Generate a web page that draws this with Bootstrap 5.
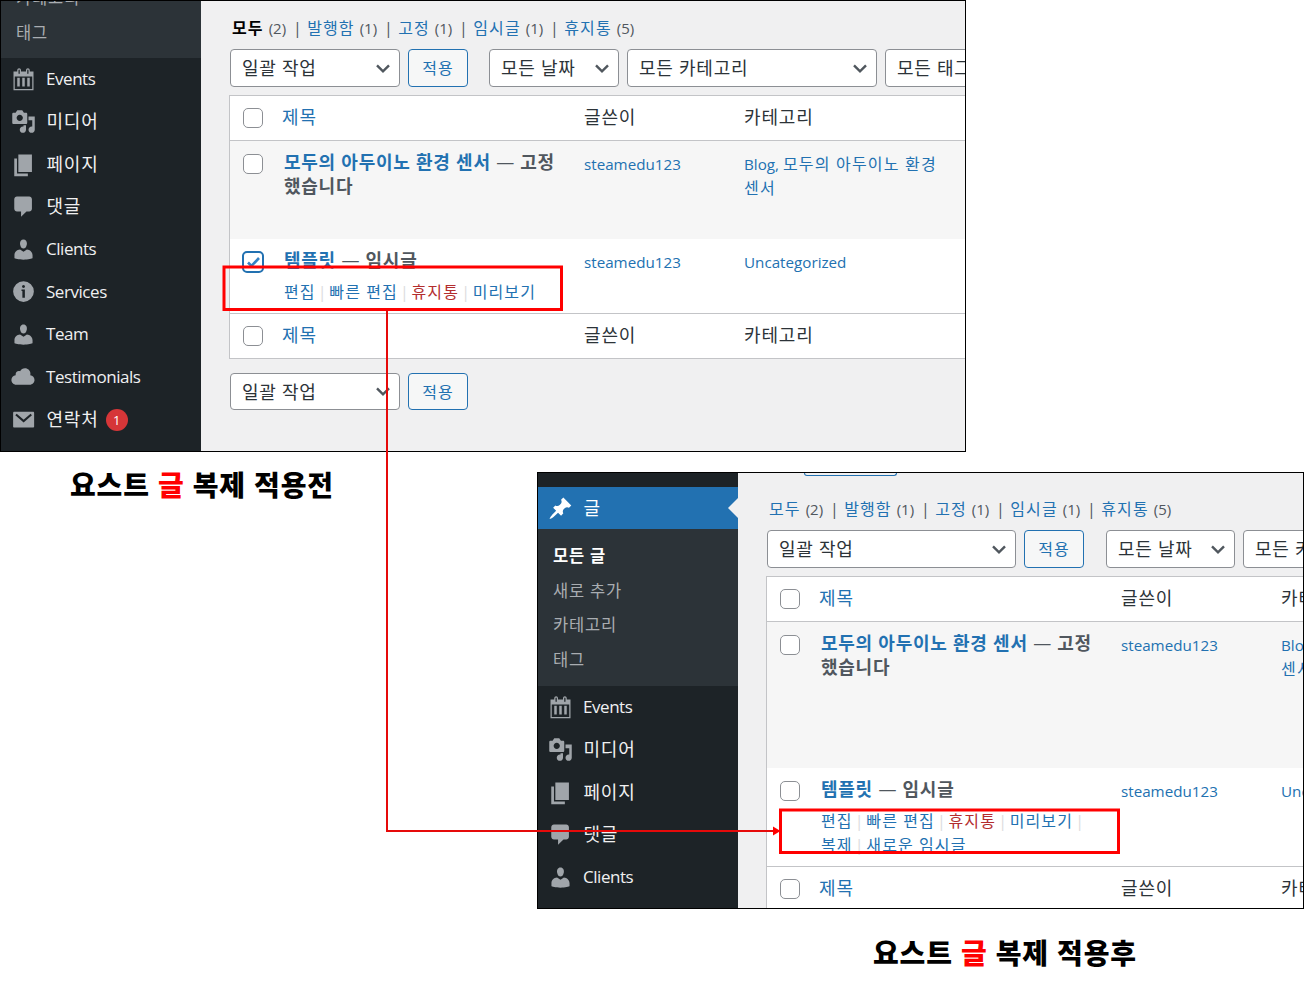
<!DOCTYPE html>
<html lang="ko">
<head>
    <meta charset="UTF-8">
    <meta name="viewport" content="width=device-width, initial-scale=1.0">
    <title>요스트 글 복제</title>
    <!-- Bootstrap CSS -->
    <link href="https://cdn.jsdelivr.net/npm/bootstrap@5.3.0/dist/css/bootstrap.min.css" rel="stylesheet">
    <style>
        body {
            width: 1304px;
            height: 987px;
            overflow: hidden;
            background: #fff;
            font-family: "Open Sans", "Noto Sans CJK KR", sans-serif;
            font-size: 17px;
            line-height: 24px;
            color: #50575e;
        }
        a { color: #2271b1; text-decoration: none; }

        /* Panels */
        .wp-panel {
            border: 1px solid #000;
            overflow: hidden;
            background: #f0f0f1;
        }
        .panel-before { width: 966px; height: 452px; }
        .panel-after { width: 767px; height: 437px; }
        .wp-side { width: 200px; background: #1d2327; }
        .wp-main { padding-left: 28px; white-space: nowrap; }
        .panel-before .wp-main { padding-top: 15px; }
        .side-after { padding-top: 14px; }

        /* Sidebar */
        .menu-item {
            height: 42.5px;
            padding-left: 10px;
            color: #f0f0f1;
            font-size: 17px;
            letter-spacing: -.45px;
        }
        .menu-item svg { width: 25px; height: 25px; margin-right: 10px; fill: #a0a5aa; }
        .menu-item .ko { font-size: 18px; letter-spacing: .8px; margin: -1px 0 0 .5px; }
        .menu-item.current { height: 42px; background: #2271b1; color: #fff; }
        .menu-item.current svg { fill: #fff; }
        .menu-item.current::after {
            content: "";
            margin-left: auto;
            border: 10px solid transparent;
            border-right-color: #f0f0f1;
            border-left: 0;
        }
        .sub-menu { background: #2c3338; padding-left: 15px; }
        .sub-menu a {
            color: #a9adb1;
            height: 34.6px;
            line-height: 34.6px;
            font-size: 16.5px;
            letter-spacing: .8px;
        }
        .sub-menu a.on { color: #fff; font-weight: 700; }
        .sub-tail { height: 57px; }
        .sub-tail a { margin-top: -20px; }
        .sub-tail a + a { margin-top: 0; }
        .sub-full { height: 157px; padding-top: 10px; }
        .count-bubble {
            width: 22px;
            height: 22px;
            margin-left: 7px;
            margin-top: 2px;
            background: #d63638;
            color: #fff;
            font-size: 13px;
            letter-spacing: 0;
        }

        /* Filters */
        .status-links { padding-left: 3px; height: 24px; font-size: 16px; letter-spacing: 1.1px; }
        .status-links .num { font-size: 15px; letter-spacing: 0; margin-left: 5px; }
        .status-links .bar { margin: 0 5.4px 0 6.9px; letter-spacing: 0; }
        .status-links b { color: #000; }
        .after-links { margin-top: 21px; }
        .filter-row { padding-left: 1px; margin-top: 9px; }
        .wp-select {
            height: 38px;
            border: 1px solid #8c8f94;
            border-radius: 4px;
            background: #fff;
            color: #2c3338;
            padding: 0 9px 0 11px;
            font-size: 18px;
            letter-spacing: .75px;
            flex-shrink: 0;
        }
        .wp-select svg { width: 14px; height: 9px; fill: none; stroke: #50575e; stroke-width: 2.4; }
        .wp-btn {
            width: 60px;
            height: 38px;
            border: 1px solid #2271b1;
            border-radius: 4px;
            background: #f6f7f7;
            color: #2271b1;
            font-size: 16px;
            letter-spacing: 1px;
            flex-shrink: 0;
        }
        .w-170 { width: 170px; }
        .w-130 { width: 130px; }
        .w-250 { width: 250px; }
        .w-249 { width: 249px; }
        .date-gap { margin-left: 13px; }
        .panel-after .date-gap { margin-left: 14px; width: 129px; }
        .bottom-row { margin-top: 14px; }
        .bottom-row > * { height: 37px; }
        .cut-btn {
            width: 93px;
            height: 3px;
            margin-left: 38px;
            border: 1px solid #2271b1;
            border-top: 0;
            border-radius: 0 0 4px 4px;
        }

        /* Post list */
        .post-list {
            width: 760px;
            margin-top: 8px;
            background: #fff;
            border: 1px solid #c3c4c7;
        }
        .post-row {
            display: grid;
            grid-template-columns: 52px 302px 160px 1fr;
        }
        .post-head {
            height: 45px;
            border-bottom: 1px solid #c3c4c7;
            color: #2c3338;
            font-size: 18px;
            letter-spacing: .85px;
            line-height: 43px;
        }
        .post-foot { border-top: 1px solid #c3c4c7; border-bottom: 0; }
        .post-row input {
            appearance: none;
            width: 20px;
            height: 20px;
            margin: 12px 0 0 13px;
            display: block;
            border: 1px solid #8c8f94;
            border-radius: 5px;
            background: #fff;
        }
        .post-row input:checked {
            width: 22px;
            height: 22px;
            margin: 12px 0 0 12px;
            border: 2px solid #2271b1;
            background: #fff url("data:image/svg+xml,%3Csvg xmlns='http://www.w3.org/2000/svg' viewBox='0 0 18 18'%3E%3Cpath d='M4 9.500l3.500 3.500 7.500-8' fill='none' stroke='%233582c4' stroke-width='2.600'/%3E%3C/svg%3E") center / 18px;
        }
        .post-row input.lower { margin-top: 13px; }
        .post-title {
            padding: 9px 0 0 2px;
            font-size: 18px;
            letter-spacing: .75px;
            font-weight: 700;
        }
        .post-title .dash { font-weight: 400; }
        .post-meta { padding-top: 11px; font-size: 15.2px; letter-spacing: 0; }
        .post-meta .ko { font-size: 16px; letter-spacing: 1.2px; }
        .row-sticky { background: #f6f6f6; }
        .row-actions {
            padding: 8px 0 0 2px;
            font-size: 16px;
            letter-spacing: 1.1px;
            font-weight: 400;
            color: #c3c4c7;
        }
        .row-actions i { font-style: normal; margin: 0 2.7px 0 2.2px; letter-spacing: 0; color: #dcdcde; }
        .row-actions .trash { color: #b32d2e; }

        /* Row heights, they differ between the two panels */
        .before-first { height: 98px; }
        .before-second { height: 74px; }
        .after-first { height: 146px; }
        .after-second { height: 98px; }

        /* Captions */
        .caption-text {
            font-size: 28px;
            line-height: 40px;
            font-weight: 900;
            letter-spacing: .85px;
            color: #000;
            white-space: nowrap;
        }
        .caption-text span { color: #f00; }
        .caption-before { width: 537px; margin-top: -7px; padding-left: 70px; }
        .caption-after { margin: 24px 0 0 873px; }
        .after-row { margin-top: 20px; }

        .marks { width: 1304px; height: 987px; pointer-events: none; }
    </style>
</head>
<body class="position-relative">
    <!-- Icons -->
    <svg class="d-none">
        <symbol id="i-post" viewBox="0 0 20 20"><path d="M10.44 3.02l1.82-1.82 6.36 6.35-1.83 1.82c-1.05-.68-2.48-.57-3.41.36l-.75.75c-.92.93-1.04 2.35-.35 3.41l-1.83 1.82-2.41-2.41-2.8 2.79c-.42.42-3.38 2.71-3.8 2.29s1.86-3.39 2.28-3.81l2.79-2.79L4.1 9.36l1.83-1.82c1.05.69 2.48.57 3.4-.36l.75-.75c.93-.92 1.05-2.35.36-3.41z"/></symbol>
        <symbol id="i-cal" viewBox="0 0.5 20 20"><path fill-rule="evenodd" d="M15 4h3v15H2V4h3V3c0-.83.67-1.5 1.5-1.5S8 2.17 8 3v1h4V3c0-.83.67-1.5 1.5-1.5S15 2.17 15 3v1zM6 3v2.5c0 .28.22.5.5.5s.5-.22.5-.5V3c0-.28-.22-.5-.5-.5S6 2.72 6 3zm7 0v2.5c0 .28.22.5.5.5s.5-.22.5-.5V3c0-.28-.22-.5-.5-.5s-.5.22-.5.5zM17 18V8H3v10h14zM7 16V9H5v7h2zm4 0V9H9v7h2zm4 0V9h-2v7h2z"/></symbol>
        <symbol id="i-media" viewBox="0 0 20 20"><path fill-rule="evenodd" d="M13 11V4c0-.55-.45-1-1-1h-1.67L9 1H5L3.67 3H2c-.55 0-1 .45-1 1v7c0 .55.45 1 1 1h10c.55 0 1-.45 1-1zM7 4.5c1.38 0 2.5 1.12 2.5 2.5S8.38 9.5 7 9.5 4.5 8.38 4.5 7 5.62 4.5 7 4.5zM14 6h5v10.5c0 1.38-1.12 2.5-2.5 2.5S14 17.88 14 16.5s1.12-2.5 2.5-2.5c.17 0 .34.02.5.05V9h-3V6zm-4 8.05V13h2v3.5c0 1.38-1.12 2.5-2.5 2.5S7 17.88 7 16.5 8.12 14 9.5 14c.17 0 .34.02.5.05z"/></symbol>
        <symbol id="i-page" viewBox="0.6 0.2 18.4 18.4"><path d="M6 15V2h10v13H6zm-1 1h8v2H3V5h2v11z"/></symbol>
        <symbol id="i-comment" viewBox="0.6 0.2 18.4 18.4"><path d="M5 2h9c1.1 0 2 .9 2 2v7c0 1.1-.9 2-2 2h-2l-4 4v-4H5c-1.100 0-2-.9-2-2V4c0-1.100.900-2 2-2z"/></symbol>
        <symbol id="i-user" viewBox="0 0 20 20"><path d="M10 9.25c-2.27 0-2.73-3.44-2.73-3.44C7 4.02 7.82 2 9.97 2c2.16 0 2.98 2.02 2.71 3.81 0 0-.41 3.44-2.68 3.44zm0 2.57L12.72 10c2.39 0 4.52 2.33 4.52 4.53v2.49s-3.65 1.13-7.24 1.13c-3.65 0-7.24-1.13-7.24-1.13v-2.49c0-2.25 1.94-4.48 4.47-4.48z"/></symbol>
        <symbol id="i-info" viewBox="0 0 20 20"><path fill-rule="evenodd" d="M10 1.7a8.3 8.3 0 1 1 0 16.6 8.3 8.3 0 0 1 0-16.6zM11.2 6a1.2 1.2 0 1 0-2.4 0 1.2 1.2 0 0 0 2.4 0zM8.4 8.4v1.1h.7v5.500h2V8.400z"/></symbol>
        <symbol id="i-cloud" viewBox="0.7 0.8 18.4 18.4"><path d="M14.9 9c1.8.2 3.1 1.7 3.1 3.5 0 1.9-1.6 3.5-3.5 3.500h-10C2.600 16 1 14.400 1 12.500 1 10.700 2.300 9.300 4.100 9 4 7.100 5.100 6 6.500 6c.3 0 .7.1.9.2C8.100 4.900 9.400 4 11 4c2.200 0 4 1.800 4 4 0 .4-.1.7-.1 1z"/></symbol>
        <symbol id="i-mail" viewBox="0 0 20 20"><path d="M2.600 3.800h15c.5 0 .9.4.9.900v10.800c0 .5-.4.9-.9.9h-15c-.5 0-.9-.4-.9-.9V4.700c0-.5.400-.9.9-.9z"/><path d="M4 6l6.100 5.300 6.100-5.300" fill="none" stroke="#1d2327" stroke-width="1.700"/></symbol>
        <symbol id="i-down" viewBox="0 0 14 9"><path d="M1 1.300l6 6 6-6"/></symbol>
    </svg>

    <!-- 적용전 -->
    <div class="wp-panel panel-before d-flex">
        <nav class="wp-side flex-shrink-0">
            <div class="sub-menu sub-tail d-flex flex-column overflow-hidden">
                <a href="#" class="flex-shrink-0">카테고리</a>
                <a href="#" class="flex-shrink-0">태그</a>
            </div>
            <div class="menu-item d-flex align-items-center"><svg><use href="#i-cal"/></svg>Events</div>
            <div class="menu-item d-flex align-items-center"><svg><use href="#i-media"/></svg><span class="ko">미디어</span></div>
            <div class="menu-item d-flex align-items-center"><svg><use href="#i-page"/></svg><span class="ko">페이지</span></div>
            <div class="menu-item d-flex align-items-center"><svg><use href="#i-comment"/></svg><span class="ko">댓글</span></div>
            <div class="menu-item d-flex align-items-center"><svg><use href="#i-user"/></svg>Clients</div>
            <div class="menu-item d-flex align-items-center"><svg><use href="#i-info"/></svg>Services</div>
            <div class="menu-item d-flex align-items-center"><svg><use href="#i-user"/></svg>Team</div>
            <div class="menu-item d-flex align-items-center"><svg><use href="#i-cloud"/></svg>Testimonials</div>
            <div class="menu-item d-flex align-items-center"><svg><use href="#i-mail"/></svg><span class="ko">연락처</span><span class="count-bubble rounded-circle d-flex align-items-center justify-content-center">1</span></div>
        </nav>
        <main class="wp-main flex-grow-1 overflow-hidden">
            <div class="status-links d-flex align-items-center">
                <b>모두</b><span class="num">(2)</span><span class="bar">|</span>
                <a href="#">발행함</a><span class="num">(1)</span><span class="bar">|</span>
                <a href="#">고정</a><span class="num">(1)</span><span class="bar">|</span>
                <a href="#">임시글</a><span class="num">(1)</span><span class="bar">|</span>
                <a href="#">휴지통</a><span class="num">(5)</span>
            </div>
            <div class="filter-row d-flex gap-2">
                <div class="wp-select w-170 d-flex align-items-center justify-content-between">일괄 작업<svg><use href="#i-down"/></svg></div>
                <div class="wp-btn d-flex align-items-center justify-content-center">적용</div>
                <div class="wp-select w-130 date-gap d-flex align-items-center justify-content-between">모든 날짜<svg><use href="#i-down"/></svg></div>
                <div class="wp-select w-250 d-flex align-items-center justify-content-between">모든 카테고리<svg><use href="#i-down"/></svg></div>
                <div class="wp-select w-170 d-flex align-items-center justify-content-between ms-auto">모든 태그<svg><use href="#i-down"/></svg></div>
            </div>
            <div class="post-list">
                <div class="post-row post-head">
                    <div><input type="checkbox"></div><a href="#">제목</a><div>글쓴이</div><div>카테고리</div>
                </div>
                <div class="post-row row-sticky before-first">
                    <div><input type="checkbox" class="lower"></div>
                    <div class="post-title"><a href="#">모두의 아두이노 환경 센서</a> <span class="dash">—</span> 고정<br>했습니다</div>
                    <div class="post-meta"><a href="#">steamedu123</a></div>
                    <div class="post-meta"><a href="#">Blog, <span class="ko">모두의 아두이노 환경<br>센서</span></a></div>
                </div>
                <div class="post-row before-second">
                    <div><input type="checkbox" checked></div>
                    <div>
                        <div class="post-title"><a href="#">템플릿</a> <span class="dash">—</span> 임시글</div>
                        <div class="row-actions"><a href="#">편집</a><i>|</i><a href="#">빠른 편집</a><i>|</i><a href="#" class="trash">휴지통</a><i>|</i><a href="#">미리보기</a></div>
                    </div>
                    <div class="post-meta"><a href="#">steamedu123</a></div>
                    <div class="post-meta"><a href="#">Uncategorized</a></div>
                </div>
                <div class="post-row post-head post-foot">
                    <div><input type="checkbox"></div><a href="#">제목</a><div>글쓴이</div><div>카테고리</div>
                </div>
            </div>
            <div class="filter-row bottom-row d-flex gap-2">
                <div class="wp-select w-170 d-flex align-items-center justify-content-between">일괄 작업<svg><use href="#i-down"/></svg></div>
                <div class="wp-btn d-flex align-items-center justify-content-center">적용</div>
            </div>
        </main>
    </div>

    <!-- 적용후 -->
    <div class="after-row d-flex align-items-start">
        <div class="caption-text caption-before flex-shrink-0">요스트 <span>글</span> 복제 적용전</div>
        <div class="wp-panel panel-after d-flex flex-shrink-0">
            <nav class="wp-side flex-shrink-0 side-after">
                <div class="menu-item current d-flex align-items-center"><svg><use href="#i-post"/></svg><span class="ko">글</span></div>
                <div class="sub-menu sub-full d-flex flex-column">
                    <a href="#" class="on">모든 글</a>
                    <a href="#">새로 추가</a>
                    <a href="#">카테고리</a>
                    <a href="#">태그</a>
                </div>
                <div class="menu-item d-flex align-items-center"><svg><use href="#i-cal"/></svg>Events</div>
                <div class="menu-item d-flex align-items-center"><svg><use href="#i-media"/></svg><span class="ko">미디어</span></div>
                <div class="menu-item d-flex align-items-center"><svg><use href="#i-page"/></svg><span class="ko">페이지</span></div>
                <div class="menu-item d-flex align-items-center"><svg><use href="#i-comment"/></svg><span class="ko">댓글</span></div>
                <div class="menu-item d-flex align-items-center"><svg><use href="#i-user"/></svg>Clients</div>
            </nav>
            <main class="wp-main flex-grow-1 overflow-hidden">
                <div class="cut-btn"></div>
                <div class="status-links after-links d-flex align-items-center">
                    <a href="#">모두</a><span class="num">(2)</span><span class="bar">|</span>
                    <a href="#">발행함</a><span class="num">(1)</span><span class="bar">|</span>
                    <a href="#">고정</a><span class="num">(1)</span><span class="bar">|</span>
                    <a href="#">임시글</a><span class="num">(1)</span><span class="bar">|</span>
                    <a href="#">휴지통</a><span class="num">(5)</span>
                </div>
                <div class="filter-row d-flex gap-2">
                    <div class="wp-select w-249 d-flex align-items-center justify-content-between">일괄 작업<svg><use href="#i-down"/></svg></div>
                    <div class="wp-btn d-flex align-items-center justify-content-center">적용</div>
                    <div class="wp-select w-130 date-gap d-flex align-items-center justify-content-between">모든 날짜<svg><use href="#i-down"/></svg></div>
                    <div class="wp-select w-250 d-flex align-items-center justify-content-between">모든 카테고리<svg><use href="#i-down"/></svg></div>
                </div>
                <div class="post-list">
                    <div class="post-row post-head">
                        <div><input type="checkbox"></div><a href="#">제목</a><div>글쓴이</div><div>카테고리</div>
                    </div>
                    <div class="post-row row-sticky after-first">
                        <div><input type="checkbox" class="lower"></div>
                        <div class="post-title"><a href="#">모두의 아두이노 환경 센서</a> <span class="dash">—</span> 고정<br>했습니다</div>
                        <div class="post-meta"><a href="#">steamedu123</a></div>
                        <div class="post-meta"><a href="#">Blog, <span class="ko">모두의 아두이노 환경<br>센서</span></a></div>
                    </div>
                    <div class="post-row after-second">
                        <div><input type="checkbox" class="lower"></div>
                        <div>
                            <div class="post-title"><a href="#">템플릿</a> <span class="dash">—</span> 임시글</div>
                            <div class="row-actions"><a href="#">편집</a><i>|</i><a href="#">빠른 편집</a><i>|</i><a href="#" class="trash">휴지통</a><i>|</i><a href="#">미리보기</a><i>|</i><br><a href="#">복제</a><i>|</i><a href="#">새로운 임시글</a></div>
                        </div>
                        <div class="post-meta"><a href="#">steamedu123</a></div>
                        <div class="post-meta"><a href="#">Uncategorized</a></div>
                    </div>
                    <div class="post-row post-head post-foot">
                        <div><input type="checkbox"></div><a href="#">제목</a><div>글쓴이</div><div>카테고리</div>
                    </div>
                </div>
            </main>
        </div>
    </div>
    <div class="caption-text caption-after">요스트 <span>글</span> 복제 적용후</div>

    <!-- Annotation boxes and arrow -->
    <svg class="marks position-absolute top-0 start-0" viewBox="0 0 1304 987" fill="none" stroke="#f00">
        <rect x="224" y="267" width="337.500" height="42.500" stroke-width="3"/>
        <path d="M387 310v521h388" stroke="#e60a0a" stroke-width="2"/>
        <path d="M773 826.500l7.500 4.500-7.500 4.500z" fill="#f00" stroke="none"/>
        <rect x="780.500" y="810" width="338" height="42.500" stroke-width="3"/>
    </svg>

    <script src="https://cdn.jsdelivr.net/npm/bootstrap@5.3.0/dist/js/bootstrap.bundle.min.js"></script>
</body>
</html>
